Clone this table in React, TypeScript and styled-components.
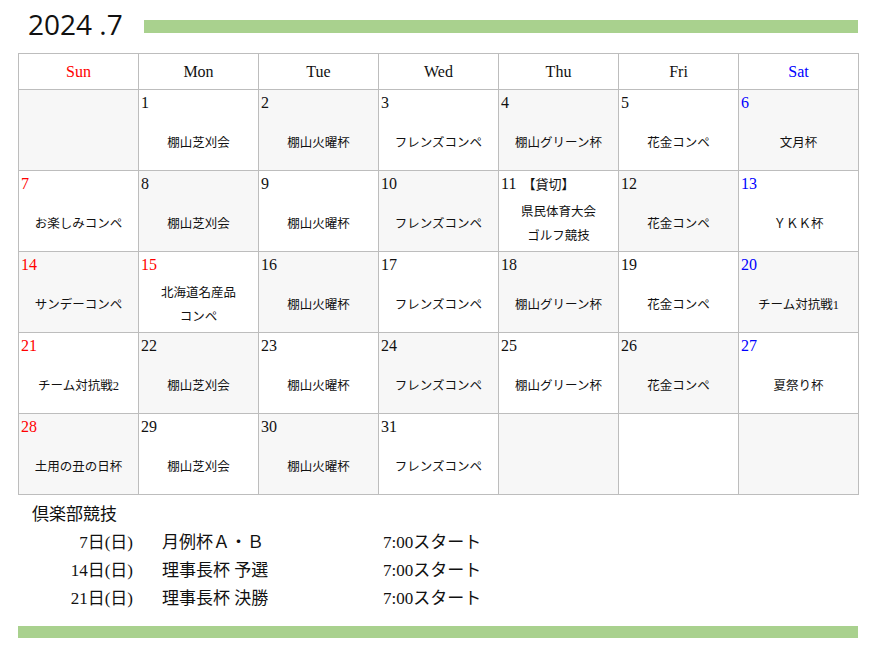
import styled, { createGlobalStyle } from "styled-components";

const GlobalStyle = createGlobalStyle`
  html, body {
    margin: 0;
    padding: 0;
    background: #fff;
  }
  body {
    font-family: "Liberation Serif", "Noto Sans CJK JP", serif;
    color: #111;
  }
`;

type Day = {
  day?: number;
  events?: string[];
  note?: string;
  color?: string;
};

const RED = "#ff0000";
const BLUE = "#0000ff";

const weekNames = [
  { name: "Sun", color: RED },
  { name: "Mon" },
  { name: "Tue" },
  { name: "Wed" },
  { name: "Thu" },
  { name: "Fri" },
  { name: "Sat", color: BLUE },
];

const weeks: Day[][] = [
  [
    {},
    { day: 1, events: ["棚山芝刈会"] },
    { day: 2, events: ["棚山火曜杯"] },
    { day: 3, events: ["フレンズコンペ"] },
    { day: 4, events: ["棚山グリーン杯"] },
    { day: 5, events: ["花金コンペ"] },
    { day: 6, events: ["文月杯"], color: BLUE },
  ],
  [
    { day: 7, events: ["お楽しみコンペ"], color: RED },
    { day: 8, events: ["棚山芝刈会"] },
    { day: 9, events: ["棚山火曜杯"] },
    { day: 10, events: ["フレンズコンペ"] },
    { day: 11, note: "【貸切】", events: ["県民体育大会", "ゴルフ競技"] },
    { day: 12, events: ["花金コンペ"] },
    { day: 13, events: ["ＹＫＫ杯"], color: BLUE },
  ],
  [
    { day: 14, events: ["サンデーコンペ"], color: RED },
    { day: 15, events: ["北海道名産品", "コンペ"], color: RED },
    { day: 16, events: ["棚山火曜杯"] },
    { day: 17, events: ["フレンズコンペ"] },
    { day: 18, events: ["棚山グリーン杯"] },
    { day: 19, events: ["花金コンペ"] },
    { day: 20, events: ["チーム対抗戦1"], color: BLUE },
  ],
  [
    { day: 21, events: ["チーム対抗戦2"], color: RED },
    { day: 22, events: ["棚山芝刈会"] },
    { day: 23, events: ["棚山火曜杯"] },
    { day: 24, events: ["フレンズコンペ"] },
    { day: 25, events: ["棚山グリーン杯"] },
    { day: 26, events: ["花金コンペ"] },
    { day: 27, events: ["夏祭り杯"], color: BLUE },
  ],
  [
    { day: 28, events: ["土用の丑の日杯"], color: RED },
    { day: 29, events: ["棚山芝刈会"] },
    { day: 30, events: ["棚山火曜杯"] },
    { day: 31, events: ["フレンズコンペ"] },
    {},
    {},
    {},
  ],
];

const clubEvents = [
  { date: "7日(日)", name: "月例杯Ａ・Ｂ", time: "7:00スタート" },
  { date: "14日(日)", name: "理事長杯 予選", time: "7:00スタート" },
  { date: "21日(日)", name: "理事長杯 決勝", time: "7:00スタート" },
];

const Page = styled.div`
  width: 877px;
  height: 655px;
  box-sizing: border-box;
  padding: 0 19px 0 18px;
`;

const TitleBar = styled.div`
  height: 53px;
  display: flex;
  align-items: center;
`;

const Title = styled.h1`
  margin: 0 0 6px 10px;
  width: 116px;
  font-family: "Open Sans", "Noto Sans", sans-serif;
  font-weight: 400;
  font-size: 28px;
  line-height: 1;
  color: #111;
  white-space: nowrap;
`;

const GreenBar = styled.div<{ $h?: number }>`
  flex: 1;
  height: ${(p) => p.$h ?? 13}px;
  background: #a9d18e;
`;

const Grid = styled.div`
  display: grid;
  grid-template-columns: repeat(7, 120px);
  border-top: 1px solid #bdbdbd;
  border-left: 1px solid #bdbdbd;
  width: 841px;
  box-sizing: border-box;
`;

const HeadCell = styled.div<{ $color?: string }>`
  box-sizing: border-box;
  height: 36px;
  padding-top: 1px;
  border-right: 1px solid #bdbdbd;
  border-bottom: 1px solid #bdbdbd;
  display: flex;
  align-items: center;
  justify-content: center;
  font-size: 16px;
  color: ${(p) => p.$color ?? "#111"};
`;

const DayCell = styled.div<{ $shade: boolean }>`
  box-sizing: border-box;
  height: 81px;
  border-right: 1px solid #bdbdbd;
  border-bottom: 1px solid #bdbdbd;
  background: ${(p) => (p.$shade ? "#f7f7f7" : "#fff")};
  display: flex;
  flex-direction: column;
`;

const DayNum = styled.div<{ $color?: string }>`
  height: 24px;
  padding: 1px 0 0 2px;
  box-sizing: border-box;
  font-size: 16px;
  line-height: 24px;
  color: ${(p) => p.$color ?? "#111"};
  white-space: nowrap;
`;

const Note = styled.span`
  font-size: 13px;
  margin-left: 6px;
  color: #111;
`;

const Events = styled.div`
  flex: 1;
  display: flex;
  flex-direction: column;
  align-items: center;
  justify-content: center;
  padding-top: 2px;
  font-size: 12.5px;
  line-height: 24px;
  white-space: nowrap;
`;

const Club = styled.div`
  padding: 6px 0 13px 14px;
`;

const ClubTitle = styled.div`
  font-size: 17px;
  line-height: 28px;
`;

const ClubRow = styled.div`
  display: grid;
  grid-template-columns: 101px 250px auto;
  font-size: 17px;
  line-height: 28px;
`;

const ClubDate = styled.span`
  text-align: right;
`;

const ClubName = styled.span`
  padding-left: 29px;
`;

export default function App() {
  return (
    <Page>
      <GlobalStyle />
      <TitleBar>
        <Title>2024 .7</Title>
        <GreenBar />
      </TitleBar>
      <Grid>
        {weekNames.map((w) => (
          <HeadCell key={w.name} $color={w.color}>
            {w.name}
          </HeadCell>
        ))}
        {weeks.map((week, r) =>
          week.map((d, c) => (
            <DayCell key={`${r}-${c}`} $shade={(r + c) % 2 === 0}>
              <DayNum $color={d.color}>
                {d.day}
                {d.note ? <Note>{d.note}</Note> : null}
              </DayNum>
              <Events>
                {d.events?.map((e) => (
                  <div key={e}>{e}</div>
                ))}
              </Events>
            </DayCell>
          ))
        )}
      </Grid>
      <Club>
        <ClubTitle>倶楽部競技</ClubTitle>
        {clubEvents.map((ev) => (
          <ClubRow key={ev.date}>
            <ClubDate>{ev.date}</ClubDate>
            <ClubName>{ev.name}</ClubName>
            <span>{ev.time}</span>
          </ClubRow>
        ))}
      </Club>
      <GreenBar $h={12} />
    </Page>
  );
}
